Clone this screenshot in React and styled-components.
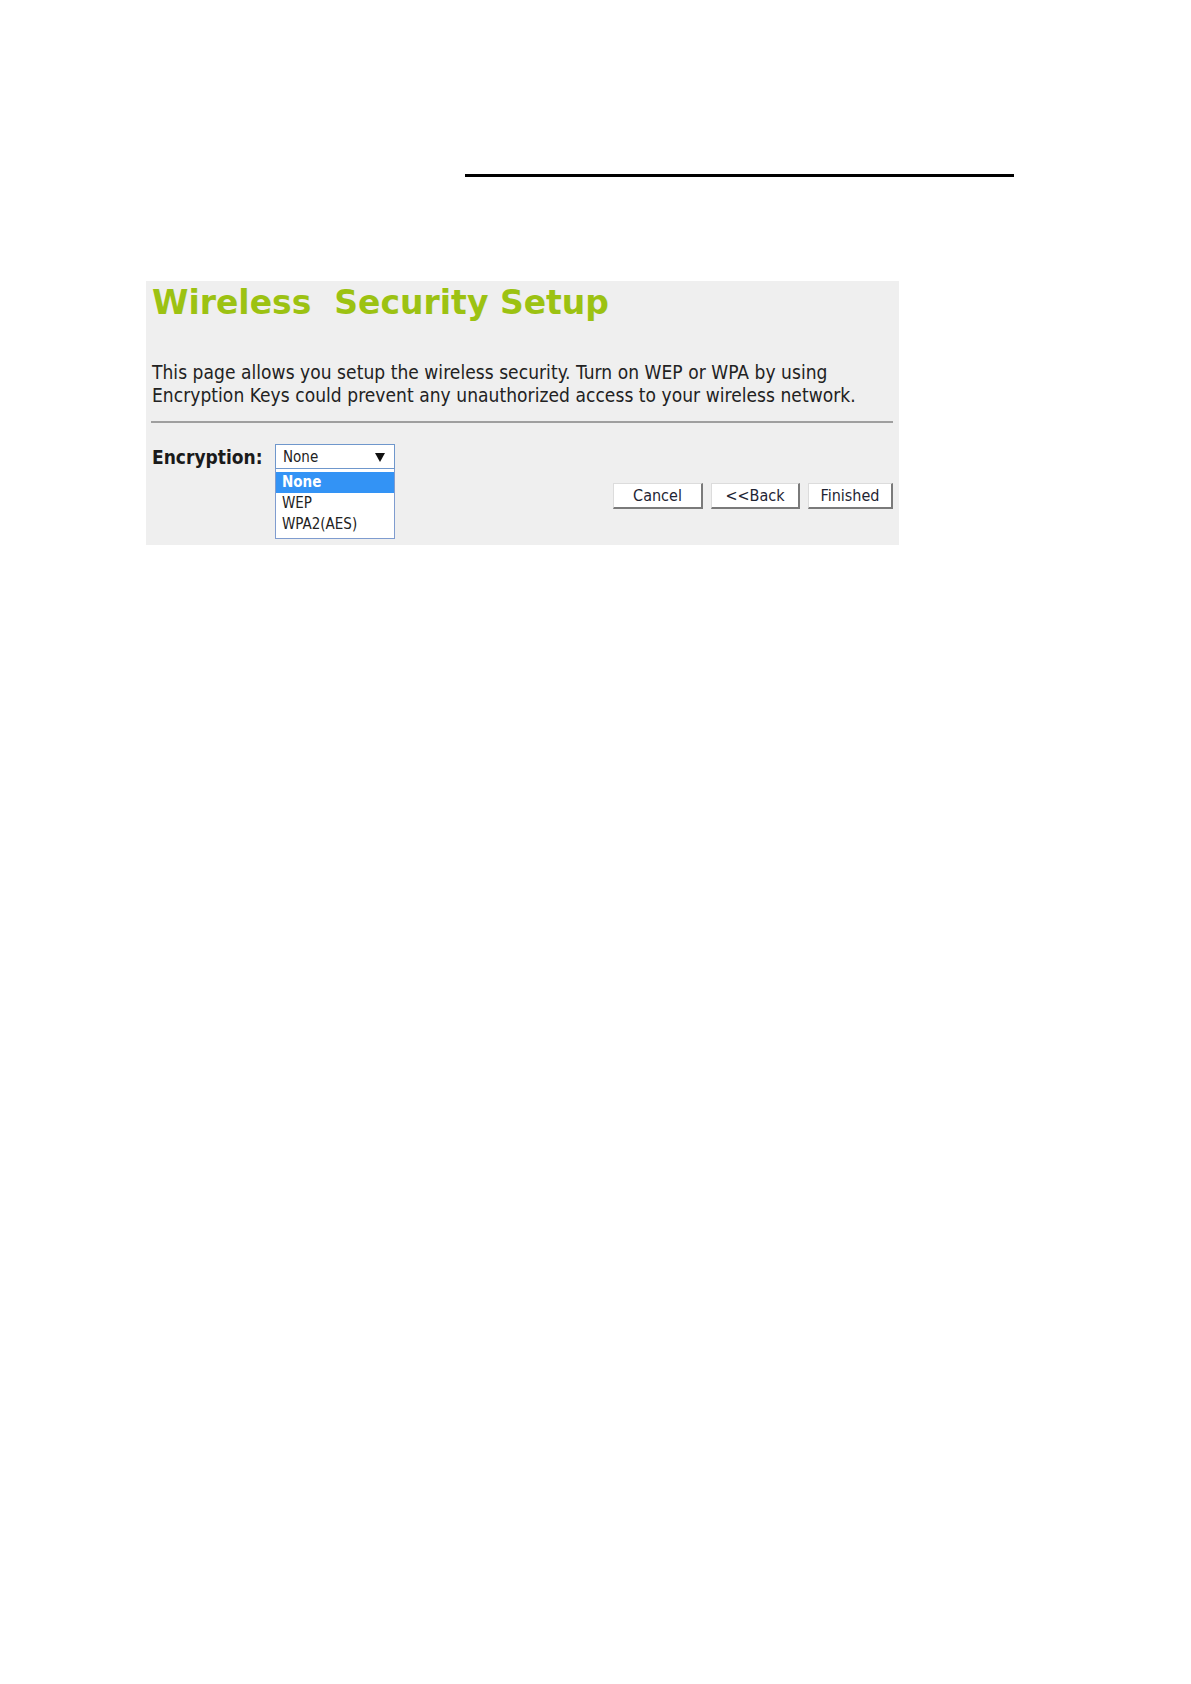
import React from "react";
import styled, { createGlobalStyle } from "styled-components";

const Global = createGlobalStyle`
  html, body { margin: 0; padding: 0; background: #ffffff; }
  body { font-family: "DejaVu Sans Condensed", "DejaVu Sans", sans-serif; }
`;

const Page = styled.div`
  width: 1191px;
  min-height: 1684px;
  padding-top: 174px;
  box-sizing: border-box;
  display: flex;
  flex-direction: column;
`;

const TopRule = styled.div`
  margin-left: 465px;
  width: 549px;
  height: 3px;
  background: #000;
`;

const Panel = styled.section`
  position: relative;
  margin-top: 104px;
  margin-left: 146px;
  width: 753px;
  height: 264px;
  box-sizing: border-box;
  padding: 0 6px;
  background: #efefef;
  display: flex;
  flex-direction: column;
`;

const Title = styled.h1`
  margin: 2px 0 0 0;
  font-family: "DejaVu Sans", sans-serif;
  font-weight: bold;
  font-size: 33px;
  line-height: 40px;
  color: #9cc212;
  white-space: pre;
`;

const Description = styled.p`
  margin: 38px 0 0 0;
  font-size: 19px;
  line-height: 23px;
  letter-spacing: 0.05px;
  color: #222;
`;

const Divider = styled.div`
  margin-top: 14px;
  margin-left: -1px;
  height: 2px;
  background: #9f9f9f;
`;

const Form = styled.div`
  margin-top: 21px;
  display: flex;
  flex-direction: column;
  gap: 14px;
`;

const FieldRow = styled.div`
  display: flex;
  align-items: center;
  height: 25px;
`;

const Label = styled.label`
  width: 123px;
  font-weight: bold;
  font-size: 19px;
  color: #1a1a1a;
`;

const SelectWrap = styled.div`
  position: relative;
  width: 120px;
`;

const SelectBox = styled.div`
  height: 25px;
  box-sizing: border-box;
  border: 1px solid #6f97cc;
  background: #fff;
  display: flex;
  align-items: center;
  justify-content: space-between;
  padding: 1px 9px 0 7px;
  font-size: 15px;
  color: #222;
`;

const OptionList = styled.ul`
  position: absolute;
  top: 25px;
  left: 0;
  width: 120px;
  box-sizing: border-box;
  margin: 0;
  padding: 3px 0 3px 0;
  list-style: none;
  background: #fff;
  border: 1px solid #7f9ccf;
  border-top: none;
  z-index: 2;
`;

const Option = styled.li`
  height: 21px;
  line-height: 21px;
  padding: 0 6px;
  font-size: 15px;
  color: ${(p) => (p.$selected ? "#fff" : "#222")};
  background: ${(p) => (p.$selected ? "#3393f5" : "transparent")};
  font-weight: ${(p) => (p.$selected ? "bold" : "normal")};
`;

const ButtonRow = styled.div`
  display: flex;
  justify-content: flex-end;
  gap: 8px;
`;

const Button = styled.button`
  width: ${(p) => p.$w}px;
  height: 26px;
  box-sizing: border-box;
  margin: 0;
  padding: 0;
  background: #fff;
  border-top: 1px solid #dcdcdc;
  border-left: 1px solid #dcdcdc;
  border-right: 2px solid #7a7a7a;
  border-bottom: 2px solid #7a7a7a;
  font-family: "DejaVu Sans Condensed", "DejaVu Sans", sans-serif;
  font-size: 16px;
  color: #1e2433;
`;

const Arrow = () => (
  <svg width="10" height="9" viewBox="0 0 10 9">
    <path d="M0 0 L10 0 L5 9 Z" fill="#111" />
  </svg>
);

export default function App() {
  return (
    <>
      <Global />
      <Page>
        <TopRule />
        <Panel>
          <Title>{"Wireless  Security Setup"}</Title>
          <Description>
            This page allows you setup the wireless security. Turn on WEP or WPA by using
            <br />
            Encryption Keys could prevent any unauthorized access to your wireless network.
          </Description>
          <Divider />
          <Form>
            <FieldRow>
              <Label>Encryption:</Label>
              <SelectWrap>
                <SelectBox>
                  <span>None</span>
                  <Arrow />
                </SelectBox>
                <OptionList>
                  <Option $selected>None</Option>
                  <Option>WEP</Option>
                  <Option>WPA2(AES)</Option>
                </OptionList>
              </SelectWrap>
            </FieldRow>
            <ButtonRow>
              <Button $w={90}>Cancel</Button>
              <Button $w={89}>&lt;&lt;Back</Button>
              <Button $w={85}>Finished</Button>
            </ButtonRow>
          </Form>
        </Panel>
      </Page>
    </>
  );
}
